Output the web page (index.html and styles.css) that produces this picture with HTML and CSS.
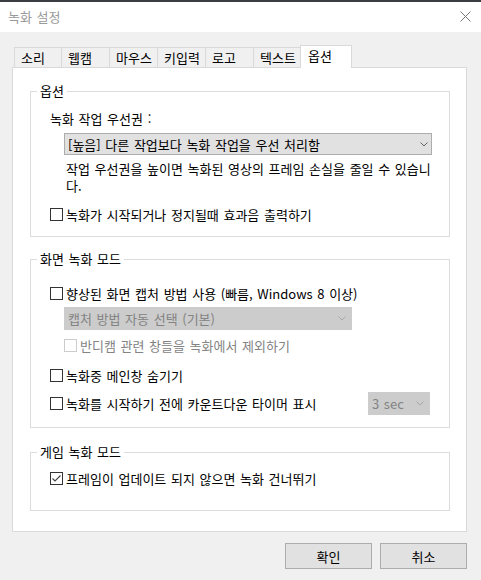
FILE: index.html
```html
<!DOCTYPE html>
<html lang="ko">
<head>
  <meta charset="UTF-8">
  <meta name="viewport" content="width=device-width, initial-scale=1.0">
  <title>녹화 설정</title>
  <link rel="stylesheet" href="styles.css">
</head>
<body>

  <div class="top-edge"></div>
  <div class="titlebar">
    <span class="title">녹화 설정</span>
    <svg class="close" width="11" height="11" viewBox="0 0 11 11">
      <path d="M0.5 0.5 L10.5 10.5 M10.5 0.5 L0.5 10.5" stroke="#777" stroke-width="1" fill="none"/>
    </svg>
  </div>

  <div class="dialog">
    <div class="tabs">
      <div class="tab first">소리</div>
      <div class="tab">웹캠</div>
      <div class="tab">마우스</div>
      <div class="tab">키입력</div>
      <div class="tab">로고</div>
      <div class="tab">텍스트</div>
      <div class="tab active">옵션</div>
    </div>

    <div class="panel">
      <!-- 옵션 -->
      <fieldset class="group">
        <legend>옵션</legend>
        <div class="group-body first-body">
          <div class="line">녹화 작업 우선권 :</div>
          <div class="select priority">
            <span>[높음] 다른 작업보다 녹화 작업을 우선 처리함</span>
            <svg width="8" height="5" viewBox="0 0 8 5"><polyline points="0.5,0.5 4,4 7.5,0.5" fill="none" stroke="#606060"/></svg>
          </div>
          <p class="desc">작업 우선권을 높이면 녹화된 영상의 프레임 손실을 줄일 수 있습니다.</p>
          <label class="row sound-row"><span class="box"></span>녹화가 시작되거나 정지될때 효과음 출력하기</label>
        </div>
      </fieldset>

      <!-- 화면 녹화 모드 -->
      <fieldset class="group screen-group">
        <legend>화면 녹화 모드</legend>
        <div class="group-body screen-body">
          <label class="row"><span class="box"></span>향상된 화면 캡처 방법 사용 (빠름, Windows 8 이상)</label>
          <div class="select disabled capture">
            <span>캡처 방법 자동 선택 (기본)</span>
            <svg width="8" height="5" viewBox="0 0 8 5"><polyline points="0.5,0.5 4,4 7.5,0.5" fill="none" stroke="#a8a8a8"/></svg>
          </div>
          <label class="row disabled-row"><span class="box off"></span>반디캠 관련 창들을 녹화에서 제외하기</label>
          <label class="row hide-row"><span class="box"></span>녹화중 메인창 숨기기</label>
          <div class="row timer-row">
            <label class="row"><span class="box"></span>녹화를 시작하기 전에 카운트다운 타이머 표시</label>
            <div class="select disabled sec">
              <span>3 sec</span>
              <svg width="8" height="5" viewBox="0 0 8 5"><polyline points="0.5,0.5 4,4 7.5,0.5" fill="none" stroke="#a8a8a8"/></svg>
            </div>
          </div>
        </div>
      </fieldset>

      <!-- 게임 녹화 모드 -->
      <fieldset class="group game-group">
        <legend>게임 녹화 모드</legend>
        <div class="group-body game-body">
          <label class="row"><span class="box on">
            <svg width="11" height="11" viewBox="0 0 11 11"><polyline points="1.5,5.5 4,8 9.5,2.5" fill="none" stroke="#444" stroke-width="1.1"/></svg>
          </span>프레임이 업데이트 되지 않으면 녹화 건너뛰기</label>
        </div>
      </fieldset>
    </div>

    <div class="buttons">
      <button class="btn">확인</button>
      <button class="btn">취소</button>
    </div>
  </div>

</body>
</html>
```

FILE: styles.css
```css
body {
  margin: 0;
  background-color: #f0f0f0;
  font-family: "Noto Sans CJK KR", "Noto Sans", sans-serif;
  font-size: 13px;
  color: #000;
  word-spacing: 1px;
}
.top-edge {
  height: 2px;
  background-color: #3a3d42;
}
.titlebar {
  height: 30px;
  background-color: #fff;
  display: flex;
  align-items: center;
  justify-content: space-between;
  padding: 0 10px 2px 8px;
  box-sizing: border-box;
}
.title {
  color: #999;
}
.close {
  margin-top: 1px;
}
.dialog {
  padding: 13px 14px 0 12px;
}
.tabs {
  display: flex;
  align-items: flex-end;
  height: 22px;
  margin-left: 2px;
}
.tab {
  box-sizing: border-box;
  width: 48px;
  height: 20px;
  border-top: 1px solid #d9d9d9;
  border-left: 1px solid #d9d9d9;
  padding-left: 6px;
  line-height: 19px;
}
.tab.first {
  width: 47px;
}
.tab.active {
  position: relative;
  width: 52px;
  height: 23px;
  margin-left: -1px;
  margin-bottom: -1px;
  padding-left: 7px;
  background-color: #fff;
  border-right: 1px solid #d9d9d9;
  line-height: 19px;
}
.panel {
  box-sizing: border-box;
  width: 455px;
  height: 465px;
  background-color: #fff;
  border: 1px solid #d9d9d9;
  padding: 15px 16px 0 17px;
}
.group {
  margin: 0;
  padding: 0;
  border: 1px solid #dcdcdc;
  min-inline-size: 0;
}
.group legend {
  margin-left: 6px;
  padding: 0 3px;
  line-height: 16px;
}
.screen-group {
  margin-top: 14px;
}
.game-group {
  margin-top: 16px;
}
.group-body {
  padding: 0 19px 0 19px;
}
.first-body {
  padding-top: 11px;
  padding-bottom: 13px;
}
.screen-body {
  padding-top: 18px;
  padding-bottom: 12px;
}
.game-body {
  padding-top: 10px;
  padding-bottom: 23px;
}
.line {
  line-height: 17px;
}
.select {
  box-sizing: border-box;
  display: flex;
  align-items: center;
  justify-content: space-between;
  height: 22px;
  background-color: #e1e1e1;
  border: 1px solid #adadad;
  padding: 0 3px 0 3px;
}
.select.priority {
  width: 368px;
  margin: 6px 0 0 14px;
}
.select.disabled {
  background-color: #cccccc;
  border-color: #cccccc;
  color: #838383;
  padding-right: 5px;
  height: 23px;
}
.select.capture {
  width: 288px;
  margin: 5px 0 0 14px;
}
.select.sec {
  width: 62px;
  margin-left: auto;
}
.desc {
  margin: 5px 0 0 16px;
  width: 366px;
  line-height: 17px;
}
.row {
  display: flex;
  align-items: center;
  gap: 3px;
  line-height: 17px;
}
.sound-row {
  margin-top: 12px;
}
.disabled-row {
  margin: 7px 0 0 14px;
  color: #838383;
}
.hide-row {
  margin-top: 13px;
}
.timer-row {
  margin-top: 8px;
  height: 23px;
  justify-content: space-between;
}
.box {
  box-sizing: border-box;
  width: 13px;
  height: 13px;
  border: 1px solid #333;
  background-color: #fff;
  display: flex;
}
.box.off {
  border-color: #cccccc;
}
.buttons {
  display: flex;
  justify-content: flex-end;
  gap: 8px;
  margin-top: 11px;
}
.btn {
  width: 87px;
  height: 26px;
  background-color: #e1e1e1;
  border: 1px solid #adadad;
  font-family: inherit;
  font-size: 13px;
  color: #000;
  padding: 0;
}
```
